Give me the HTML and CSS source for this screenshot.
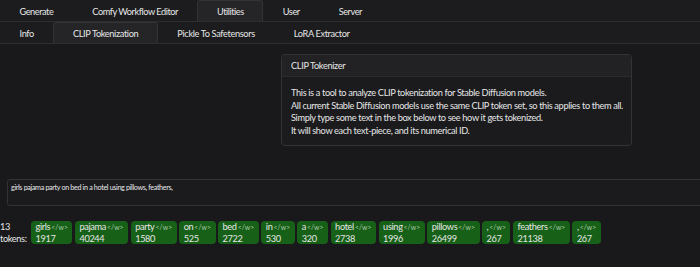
FILE: index.html
```html
<!DOCTYPE html>
<html lang="en">
<head>
  <meta charset="UTF-8">
  <title>CLIP Tokenization</title>
  <link rel="stylesheet" href="styles.css">
</head>
<body>
  <nav class="tabs main-tabs">
    <span class="tab">Generate</span>
    <span class="tab">Comfy Workflow Editor</span>
    <span class="tab active">Utilities</span>
    <span class="tab">User</span>
    <span class="tab">Server</span>
  </nav>
  <nav class="tabs sub-tabs">
    <span class="tab">Info</span>
    <span class="tab active">CLIP Tokenization</span>
    <span class="tab">Pickle To Safetensors</span>
    <span class="tab">LoRA Extractor</span>
  </nav>

  <div class="page">
    <div class="card">
      <div class="card-header">CLIP Tokenizer</div>
      <div class="card-body">
        This is a tool to analyze CLIP tokenization for Stable Diffusion models.<br>
        All current Stable Diffusion models use the same CLIP token set, so this applies to them all.<br>
        Simply type some text in the box below to see how it gets tokenized.<br>
        It will show each text-piece, and its numerical ID.
      </div>
    </div>

    <textarea class="prompt">girls pajama party on bed in a hotel using pillows, feathers,</textarea>

    <div class="tokens">
      <div class="count">13<br>tokens:</div>
      <div class="token"><span class="word">girls<small>&lt;/w&gt;</small></span><span>1917</span></div>
      <div class="token"><span class="word">pajama<small>&lt;/w&gt;</small></span><span>40244</span></div>
      <div class="token"><span class="word">party<small>&lt;/w&gt;</small></span><span>1580</span></div>
      <div class="token"><span class="word">on<small>&lt;/w&gt;</small></span><span>525</span></div>
      <div class="token"><span class="word">bed<small>&lt;/w&gt;</small></span><span>2722</span></div>
      <div class="token"><span class="word">in<small>&lt;/w&gt;</small></span><span>530</span></div>
      <div class="token"><span class="word">a<small>&lt;/w&gt;</small></span><span>320</span></div>
      <div class="token"><span class="word">hotel<small>&lt;/w&gt;</small></span><span>2738</span></div>
      <div class="token"><span class="word">using<small>&lt;/w&gt;</small></span><span>1996</span></div>
      <div class="token"><span class="word">pillows<small>&lt;/w&gt;</small></span><span>26499</span></div>
      <div class="token"><span class="word">,<small>&lt;/w&gt;</small></span><span>267</span></div>
      <div class="token"><span class="word">feathers<small>&lt;/w&gt;</small></span><span>21138</span></div>
      <div class="token"><span class="word">,<small>&lt;/w&gt;</small></span><span>267</span></div>
    </div>
  </div>
</body>
</html>
```

FILE: styles.css
```css
body {
  margin: 0;
  background-color: #19191b;
  color: #e6e6e6;
  font-family: Lato, "Open Sans", sans-serif;
  font-size: 9.2px;
  letter-spacing: -0.35px;
}
.tabs {
  display: flex;
  height: 21px;
  background: #1c1c1e;
  border-bottom: 1px solid #2e2e31;
}
.tab {
  display: flex;
  align-items: center;
  padding: 0 18.5px;
  border: 1px solid transparent;
  border-bottom: none;
  border-radius: 3px 3px 0 0;
}
.main-tabs .tab {
  letter-spacing: -0.45px;
}
.tab.active {
  background: #252528;
  border-color: #333336;
}
.page {
  padding: 10px 0 0 0;
}
.card {
  width: 351px;
  margin-left: 281px;
  border: 1px solid #333336;
  border-radius: 4px;
  background: #1b1b1e;
  box-sizing: border-box;
}
.card-header {
  height: 21px;
  line-height: 21px;
  padding: 0 9px;
  background: #222225;
  border-bottom: 1px solid #2b2b2e;
  border-radius: 4px 4px 0 0;
}
.card-body {
  padding: 10px 9px 7px;
  line-height: 12.7px;
  white-space: nowrap;
}
.prompt {
  display: block;
  box-sizing: border-box;
  width: 700px;
  height: 27px;
  margin: 33px 0 0 7px;
  padding: 3px 3px;
  background: #1b1b1e;
  color: #e6e6e6;
  border: 1px solid #333336;
  border-radius: 3px;
  font-family: inherit;
  font-size: 7.2px;
  letter-spacing: -0.35px;
  resize: none;
}
.tokens {
  display: flex;
  align-items: flex-start;
  gap: 2.5px;
  margin-top: 15px;
}
.count {
  width: 28.5px;
  line-height: 12px;
}
.token {
  display: flex;
  flex-direction: column;
  justify-content: center;
  padding: 0 4.5px;
  height: 23px;
  box-sizing: border-box;
  background: #176017;
  border-radius: 4px;
  line-height: 11px;
  font-size: 9.2px;
}
.token small {
  font-size: 6.8px;
  color: #a9c9a9;
  margin-left: 1px;
  letter-spacing: 0.1px;
}
```
